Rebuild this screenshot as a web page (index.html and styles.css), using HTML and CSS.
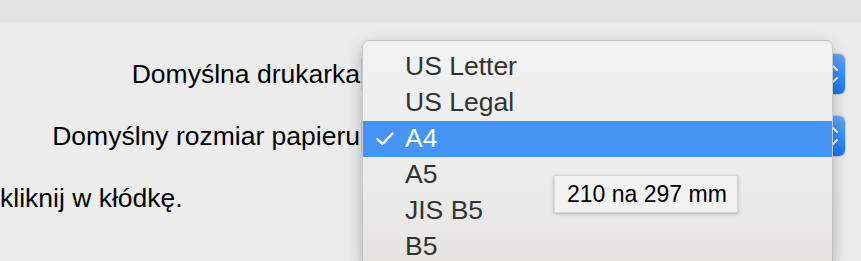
FILE: index.html
```html
<!DOCTYPE html>
<html lang="pl">
<head>
	<meta charset="UTF-8">
	<title>Drukarki i skanery</title>
	<link rel="stylesheet" href="styles.css">
</head>
<body>
	<div class="toolbar"></div>
	<div class="form">
		<div class="label">Domyślna drukarka</div>
		<div class="popup">
			<span class="cap">
				<svg width="24" height="40" viewBox="0 0 24 40">
					<path d="M8 16 L12 12 L16 16 M8 24 L12 28 L16 24" fill="none" stroke="#fff" stroke-width="2" stroke-linecap="round" stroke-linejoin="round"/>
				</svg>
			</span>
		</div>
		<div class="label">Domyślny rozmiar papieru</div>
		<div class="popup">
			<span class="cap">
				<svg width="24" height="40" viewBox="0 0 24 40">
					<path d="M8 16 L12 12 L16 16 M8 24 L12 28 L16 24" fill="none" stroke="#fff" stroke-width="2" stroke-linecap="round" stroke-linejoin="round"/>
				</svg>
			</span>
		</div>
	</div>
	<p class="hint">kliknij w kłódkę.</p>

	<ul class="menu">
		<li>US Letter</li>
		<li>US Legal</li>
		<li class="selected">
			<svg class="check" width="18" height="14" viewBox="0 0 18 14">
				<path d="M1.5 7 L6.5 12 L16.5 1.5" fill="none" stroke="#fff" stroke-width="2.4" stroke-linecap="round" stroke-linejoin="round"/>
			</svg>
			A4
		</li>
		<li>A5</li>
		<li>JIS B5</li>
		<li>B5</li>
	</ul>

	<div class="tooltip">210 na 297 mm</div>
</body>
</html>
```

FILE: styles.css
```css
*{
	margin: 0;
	padding: 0;
	box-sizing: border-box;
}
body{
	background: #ececec;
	font-family: "Liberation Sans", Arial, sans-serif;
	color: #000;
	overflow: hidden;
	height: 261px;
	position: relative;
}
.toolbar{
	height: 22px;
	background: #e3e3e3;
}
.form{
	display: grid;
	grid-template-columns: 360px 483px;
	column-gap: 2px;
	row-gap: 22px;
	padding-top: 32px;
	align-items: center;
}
.label{
	text-align: right;
	font-size: 26.5px;
}
.popup{
	height: 40px;
	background: #fff;
	border-radius: 6px;
	box-shadow: 0 0 0 1px rgba(0,0,0,.12);
	display: flex;
	justify-content: flex-end;
}
.cap{
	width: 24px;
	height: 40px;
	border-radius: 0 6px 6px 0;
	background: linear-gradient(#62a8f7, #1976f2);
}
.cap svg{
	display: block;
}
.hint{
	margin-top: 27px;
	font-size: 26.5px;
}
.menu{
	position: absolute;
	left: 362px;
	top: 40px;
	width: 471px;
	height: 221px;
	padding-top: 8px;
	list-style: none;
	overflow: hidden;
	border-radius: 7px 7px 0 0;
	border: 1px solid rgba(0,0,0,.16);
	border-bottom: none;
	background: linear-gradient(#f1f1f1, #ececec 60%, #e6e3e3);
	box-shadow: 0 6px 16px rgba(0,0,0,.28);
}
.menu li{
	height: 36px;
	line-height: 34px;
	padding-left: 42px;
	font-size: 26.5px;
	color: #333;
	position: relative;
}
.menu li.selected{
	background: #4594f6;
	color: #fff;
}
.check{
	position: absolute;
	left: 13px;
	top: 11px;
}
.tooltip{
	position: absolute;
	left: 554px;
	top: 175px;
	width: 184px;
	height: 38px;
	line-height: 36px;
	padding-left: 12px;
	font-size: 23px;
	background: #f2f2f2;
	border: 1px solid #d6d6d6;
	box-shadow: 0 1px 3px rgba(0,0,0,.25);
}
```
